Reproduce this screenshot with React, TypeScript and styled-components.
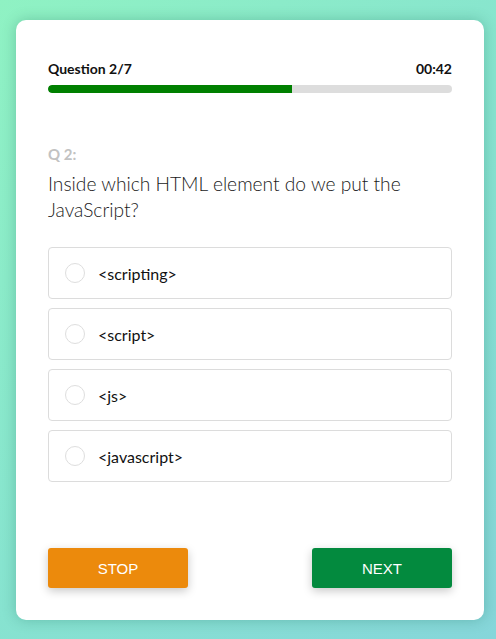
import React from "react";
import styled, { createGlobalStyle } from "styled-components";

const Global = createGlobalStyle`
  html, body { margin: 0; padding: 0; }
  body {
    width: 496px;
    height: 639px;
    background: linear-gradient(135deg, #8ff2c3 0%, #87e4cf 50%, #86d6da 100%);
    font-family: Lato, "Open Sans", sans-serif;
    overflow: hidden;
  }
`;

const Page = styled.div`
  padding: 20px 12px 19px 16px;
  box-sizing: border-box;
  height: 639px;
`;

const Card = styled.div`
  width: 468px;
  height: 600px;
  background: #fff;
  border-radius: 10px;
  box-shadow: 0 0 14px rgba(0, 80, 60, 0.25);
  box-sizing: border-box;
  padding: 40px 32px 32px 32px;
  display: flex;
  flex-direction: column;
`;

const Header = styled.div`
  display: flex;
  justify-content: space-between;
  align-items: baseline;
  font-weight: 700;
  font-size: 14px;
  line-height: 17px;
  color: #111;
`;

const Track = styled.div`
  margin-top: 8px;
  height: 8px;
  border-radius: 4px;
  background: #dddddd;
  overflow: hidden;
`;

const Fill = styled.div`
  height: 100%;
  background: #008000;
  border-radius: 4px 0 0 4px;
`;

const QLabel = styled.div`
  margin-top: 53px;
  font-weight: 700;
  font-size: 15px;
  line-height: 17px;
  color: #c2c2c2;
`;

const QText = styled.div`
  margin-top: 8px;
  font-weight: 300;
  font-size: 19.2px;
  line-height: 26px;
  color: #1a1a1a;
`;

const Options = styled.div`
  margin-top: 24px;
  display: flex;
  flex-direction: column;
  gap: 9px;
`;

const Option = styled.label`
  display: flex;
  align-items: center;
  height: 52px;
  box-sizing: border-box;
  border: 1px solid #dcdcdc;
  border-radius: 4px;
  padding-left: 16px;
  gap: 13px;
  font-size: 16px;
  color: #111;
`;

const Radio = styled.span`
  width: 20px;
  height: 20px;
  border-radius: 50%;
  border: 1px solid #dedede;
  box-sizing: border-box;
`;

const Footer = styled.div`
  margin-top: auto;
  display: flex;
  justify-content: space-between;
`;

const Button = styled.button<{ $bg: string }>`
  width: 140px;
  height: 40px;
  border: none;
  border-radius: 3px;
  background: ${(p) => p.$bg};
  color: #fff;
  font-family: "Liberation Sans", Arial, sans-serif;
  font-size: 15px;
  box-shadow: 0 3px 10px rgba(0, 0, 0, 0.22);
  cursor: pointer;
`;

const options = ["<scripting>", "<script>", "<js>", "<javascript>"];

export default function App() {
  return (
    <>
      <Global />
      <Page>
        <Card>
          <Header>
            <span>Question 2/7</span>
            <span>00:42</span>
          </Header>
          <Track>
            <Fill style={{ width: `${(244 / 404) * 100}%` }} />
          </Track>
          <QLabel>Q 2:</QLabel>
          <QText>Inside which HTML element do we put the JavaScript?</QText>
          <Options>
            {options.map((o) => (
              <Option key={o}>
                <Radio />
                <span>{o}</span>
              </Option>
            ))}
          </Options>
          <Footer>
            <Button $bg="#ec8a0c">STOP</Button>
            <Button $bg="#038a3e">NEXT</Button>
          </Footer>
        </Card>
      </Page>
    </>
  );
}
